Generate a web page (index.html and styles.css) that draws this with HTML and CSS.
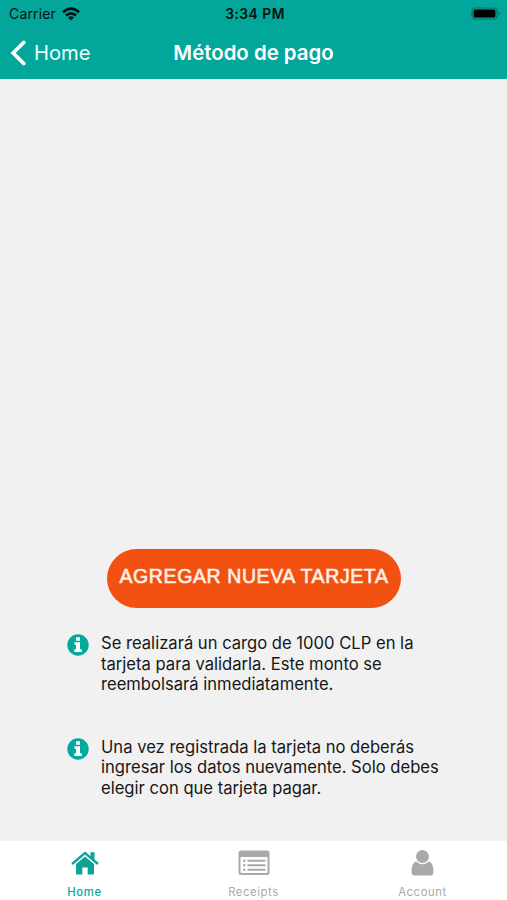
FILE: index.html
```html
<!DOCTYPE html>
<html lang="es">
<head>
<meta charset="utf-8">
<title>Método de pago</title>
<link rel="stylesheet" href="styles.css">
</head>
<body>
<div class="screen">
  <header class="header">
    <div class="status">
      <div class="carrier"><span>Carrier</span>
        <svg class="wifi" viewBox="0 0 18 14"><g fill="none" stroke="#06110f" stroke-width="2.7"><path d="M1 5.2Q9-1.8 17 5.2"/><path d="M4 8.5Q9 4.2 14 8.5"/></g><path d="M5.900 10.400Q9 8 12.100 10.400L9 13.600Z" fill="#06110f"/></svg>
      </div>
      <div class="time">3:34 PM</div>
      <svg class="battery" viewBox="0 0 30 14"><rect x="1" y="1" width="25" height="11" rx="3.2" fill="none" stroke="#067066" stroke-width="1.2"/><rect x="2.6" y="2.6" width="21.8" height="7.8" rx="1.5" fill="#000"/><path d="M27.5 4.5Q30.5 6.5 27.5 8.5Z" fill="#067066"/></svg>
    </div>
    <nav class="nav">
      <a class="back"><svg class="chevron" viewBox="0 0 17 28"><path d="M14.700 3.500 4.200 14 14.700 24.500" fill="none" stroke="#fff" stroke-width="3.800" stroke-linecap="round"/></svg><span>Home</span></a>
      <h1 class="title">Método de pago</h1>
    </nav>
  </header>
  <main class="content">
    <button class="add"><span>AGREGAR NUEVA TARJETA</span></button>
    <section class="note">
      <svg class="info" viewBox="0 0 22 22"><circle cx="11" cy="11" r="10.7" fill="#02a99d"/><path d="M9 3.2h4v3.5H9zM7.500 8.300H13v7h1.800v2.600H7.300v-2.600H9v-4.500H7.500z" fill="#fff"/></svg>
      <p>Se realizará un cargo de 1000 CLP en la<br>tarjeta para validarla. Este monto se<br>reembolsará inmediatamente.</p>
    </section>
    <section class="note">
      <svg class="info" viewBox="0 0 22 22"><circle cx="11" cy="11" r="10.7" fill="#02a99d"/><path d="M9 3.2h4v3.5H9zM7.500 8.300H13v7h1.800v2.600H7.300v-2.600H9v-4.500H7.500z" fill="#fff"/></svg>
      <p>Una vez registrada la tarjeta no deberás<br>ingresar los datos nuevamente. Solo debes<br>elegir con que tarjeta pagar.</p>
    </section>
  </main>
  <footer class="tabs">
    <a class="tab active"><svg viewBox="0 0 32 28"><path d="M16 7.500 25 15v9.500q0 1-1 1h-5.300v-7h-5.400v7H8q-1 0-1-1V15z" fill="currentColor"/><path d="M3 15 16 4.100 29 15" fill="none" stroke="currentColor" stroke-width="2.300"/><path d="M21.500 3.300h4v9l-4-3.400z" fill="currentColor"/></svg><span>Home</span></a>
    <a class="tab"><svg viewBox="0 0 32 28"><path fill-rule="evenodd" d="M3 1.500h26q2.500 0 2.500 2.500v19.500Q31.500 26 29 26H3Q.5 26 .5 23.500V4Q.5 1.500 3 1.500zM2.500 8v15q0 1 1 1h25q1 0 1-1V8z" fill="currentColor"/><path d="M5 11.800h2.500M9.500 11.800h18M5 16.300h2.500M9.500 16.300h18M5 20.800h2.500M9.500 20.800h18" stroke="currentColor" stroke-width="2"/></svg><span>Receipts</span></a>
    <a class="tab"><svg viewBox="0 0 32 28"><circle cx="15.500" cy="7.500" r="6.500" fill="currentColor"/><path d="M9 12.500Q15.500 18 22 12.500Q26.500 14 26.500 23Q26.500 26.500 23 26.500H8Q4.500 26.500 4.500 23Q4.500 14 9 12.500z" fill="currentColor"/></svg><span>Account</span></a>
  </footer>
</div>
</body>
</html>
```
FILE: styles.css
```css
* { box-sizing: border-box; }
body { margin: 0; font-family: Inter, "Liberation Sans", sans-serif; color: #171717; }
.screen { width: 507px; height: 900px; display: flex; flex-direction: column; background: #f1f1f1; }
.header { height: 79px; background: #02a69b; flex: none; }
.status { height: 28px; display: grid; grid-template-columns: 1fr auto 1fr; align-items: center; color: #06110f; padding: 0 6px 1px 9px; }
.carrier { display: flex; align-items: center; gap: 6px; font-size: 14px; letter-spacing: .15px; }
.wifi { width: 18px; height: 14px; }
.time { font-size: 13.8px; font-weight: 600; letter-spacing: .5px; }
.battery { width: 30px; height: 14px; justify-self: end; }
.nav { height: 49px; display: grid; grid-template-columns: 1fr auto 1fr; align-items: center; color: #fff; padding: 0 9px; }
.back { display: flex; align-items: center; gap: 8px; font-size: 20.2px; color: #e9fffc; }
.chevron { width: 17px; height: 28px; }
.title { margin: 0; font-size: 20.4px; font-weight: 600; }
.content { flex: 1; display: flex; flex-direction: column; padding: 470px 60px 0 67px; }
.add { width: 294px; height: 59px; flex: none; margin: 0 0 25px 40px; padding: 0 0 5px; border: 0; border-radius: 30px; background: #f35111; color: #fff0e4; font: 500 19.5px "Liberation Sans", sans-serif; letter-spacing: .6px; -webkit-text-stroke: .6px #fff0e4; white-space: nowrap; }
.note { display: flex; align-items: flex-start; gap: 12px; margin-bottom: 41.5px; }
.info { width: 22px; height: 22px; margin-top: 1px; flex: none; }
.note p { margin: 0; font-size: 16.6px; line-height: 20.7px; white-space: nowrap; }
.tabs { height: 59px; flex: none; display: grid; grid-template-columns: repeat(3, 1fr); background: #fff; }
.tab { display: flex; flex-direction: column; align-items: center; padding-top: 8px; color: #a9a9a9; font-size: 11.3px; line-height: 14px; letter-spacing: .6px; }
.tab svg { width: 32px; height: 28px; margin-bottom: 8px; }
.active { color: #0ba497; font-weight: 500; }
```
